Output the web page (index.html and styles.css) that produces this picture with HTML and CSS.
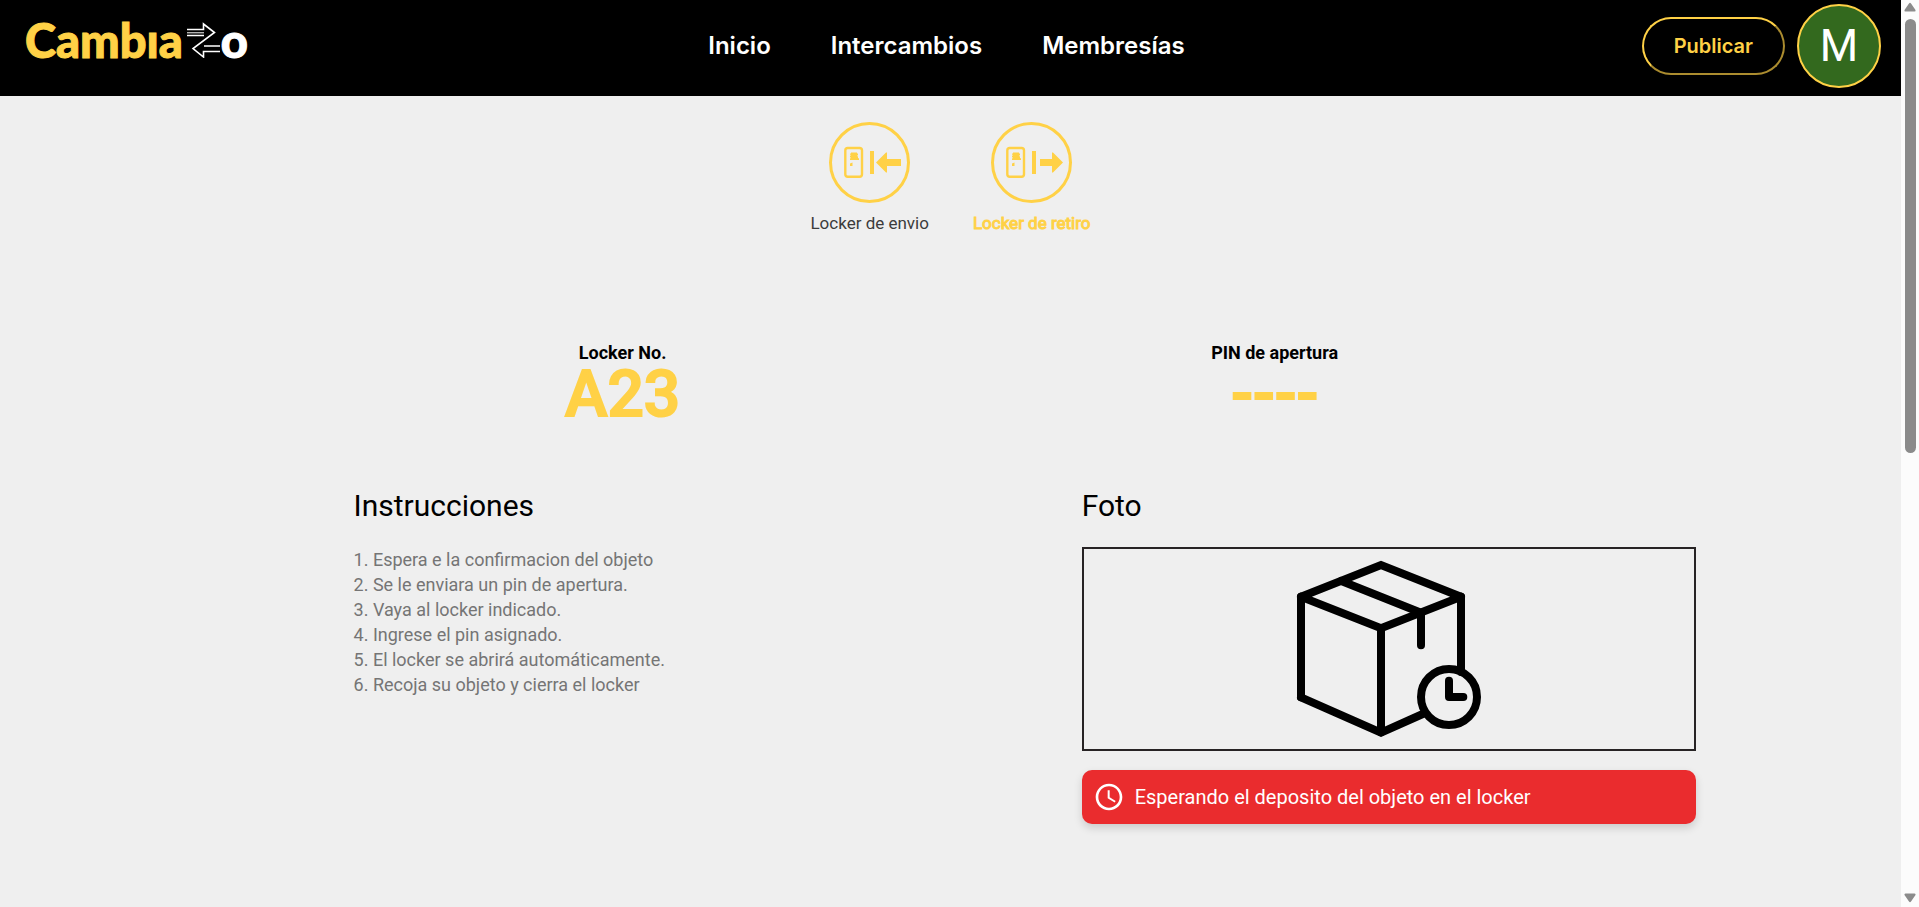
FILE: index.html
```html
<!DOCTYPE html>
<html lang="es">
<head>
<meta charset="utf-8">
<title>CambiaZo - Locker</title>
<link rel="stylesheet" href="styles.css">
</head>
<body>
<div class="page">
  <header class="header">
    <a class="logo" href="#">
      <span class="logo-main">Cambıa</span>
      <svg class="logo-arrows" viewBox="0 0 34 36" fill="none" stroke="#fff" stroke-width="1.6" aria-hidden="true">
        <path d="M0 7.500h16.500V2L27.500 10.500L6 26.500L16.500 35V29.500H33M0 13.500h17M17 24h16"/>
        <path stroke-width="1" d="M0 10.800h17"/>
      </svg>
      <span class="logo-end">o</span>
    </a>
    <nav class="nav">
      <a href="#">Inicio</a>
      <a href="#">Intercambios</a>
      <a href="#">Membresías</a>
    </nav>
    <div class="account">
      <button class="publish" type="button">Publicar</button>
      <button class="avatar" type="button">M</button>
    </div>
  </header>

  <main class="main">
    <div class="tabs">
      <button class="tab" type="button">
        <svg class="tab-icon" viewBox="0 0 81 81" aria-hidden="true">
          <circle cx="40.500" cy="40.500" r="39" fill="none" stroke="currentColor" stroke-width="3"/>
          <rect x="16.300" y="26" width="16.700" height="28.700" rx="2.500" fill="none" stroke="currentColor" stroke-width="2.400"/>
          <path d="M22 30.500h6v1h1v2h-1v.7h1v2h1V38h-9v-1.800h1v-.7h-1v-2h1v-.7h-1v-1.300h1zM21 41.500l2.500-1V44H21zM41 29h4v23h-4z"/>
          <path d="M47 40.500L57 30.500h1V37h14v7H58v6.500h-1z"/>
        </svg>
        <span>Locker de envio</span>
      </button>
      <button class="tab tab-active" type="button">
        <svg class="tab-icon" viewBox="0 0 81 81" aria-hidden="true">
          <circle cx="40.500" cy="40.500" r="39" fill="none" stroke="currentColor" stroke-width="3"/>
          <rect x="16.300" y="26" width="16.700" height="28.700" rx="2.500" fill="none" stroke="currentColor" stroke-width="2.400"/>
          <path d="M22 30.500h6v1h1v2h-1v.7h1v2h1V38h-9v-1.800h1v-.7h-1v-2h1v-.7h-1v-1.300h1zM21 41.500l2.500-1V44H21zM41 29h4v23h-4z"/>
          <path d="M72 40.500L62 30.500h-1V37H49v7h12v6.500h1z"/>
        </svg>
        <span>Locker de retiro</span>
      </button>
    </div>

    <section class="codes">
      <div class="code">
        <h2 class="code-label">Locker No.</h2>
        <p class="code-value">A23</p>
      </div>
      <div class="code">
        <h2 class="code-label">PIN de apertura</h2>
        <p class="code-value">----</p>
      </div>
    </section>

    <div class="details">
      <section>
        <h2 class="title">Instrucciones</h2>
        <ol class="steps">
          <li>Espera e la confirmacion del objeto</li>
          <li>Se le enviara un pin de apertura.</li>
          <li>Vaya al locker indicado.</li>
          <li>Ingrese el pin asignado.</li>
          <li>El locker se abrirá automáticamente.</li>
          <li>Recoja su objeto y cierra el locker</li>
        </ol>
      </section>
      <section>
        <h2 class="title">Foto</h2>
        <div class="photo">
          <svg class="package" viewBox="0 0 200 200" fill="none" stroke="#000" stroke-width="8" stroke-linecap="round" aria-hidden="true">
            <path d="M12 47.700L92 16l80 31.700M12 47.700L92 79.300l80-31.600M12 148.300l80 35.400 44-19.700"/>
            <path stroke-linejoin="round" d="M12 47.700v100.600M92 79.300v104M52.300 32L132 63.700v32.600M172 47.700V123"/>
            <circle cx="160" cy="148" r="28"/>
            <path stroke-linejoin="round" d="M160 131.700V148h14.300"/>
          </svg>
        </div>
        <div class="alert" role="status">
          <svg class="alert-icon" viewBox="0 0 24 24" fill="#fff" aria-hidden="true">
            <path d="M11.990 2C6.470 2 2 6.480 2 12s4.470 10 9.990 10C17.520 22 22 17.520 22 12S17.520 2 11.990 2zM12 20c-4.420 0-8-3.580-8-8s3.580-8 8-8 8 3.580 8 8-3.580 8-8 8zM12.500 7H11v6l5.250 3.150.75-1.230-4.500-2.670z"/>
          </svg>
          <span>Esperando el deposito del objeto en el locker</span>
        </div>
      </section>
    </div>
  </main>
</div>
<div class="scrollbar" aria-hidden="true">
  <svg class="scroll-arrow" viewBox="0 0 12 10"><path d="M5 1.500Q6 0 7 1.500L11.500 8Q12 9.500 10.500 9.500H1.500Q0 9.500 .5 8z"/></svg>
  <div class="scroll-track"><div class="scroll-thumb"></div></div>
  <svg class="scroll-arrow" viewBox="0 0 12 10"><path d="M5 8.500Q6 10 7 8.500L11.500 2Q12 .5 10.500 .5H1.500Q0 .5 .5 2z"/></svg>
</div>
</body>
</html>
```
FILE: styles.css
```css
* {
  box-sizing: border-box;
}

body {
  margin: 0;
  display: flex;
  min-height: 100vh;
  background: #efefef;
  color: #000;
  font-family: Roboto, "Liberation Sans", sans-serif;
}

h2, p, ol {
  margin: 0;
  padding: 0;
}

a {
  color: inherit;
  text-decoration: none;
}

button {
  cursor: pointer;
}

.page {
  flex: 1;
  min-width: 0;
}

.header {
  display: grid;
  grid-template-columns: 1fr auto 1fr;
  align-items: center;
  padding: 4px 20px 8px 25px;
  background: #000;
  color: #fff;
}

.logo {
  display: flex;
  align-items: center;
  padding-bottom: 12px;
  font: 900 47px/56px Lato, sans-serif;
  -webkit-text-stroke: 1px currentColor;
}

.logo-main {
  color: #ffd146;
}

.logo-arrows {
  width: 34px;
  height: 36px;
  margin-left: 4px;
}

.nav {
  display: flex;
  gap: 60px;
  margin-right: 13px;
  font: 600 24px/32px Inter, sans-serif;
}

.account {
  display: flex;
  align-items: center;
  justify-content: flex-end;
  gap: 12px;
}

.publish {
  padding: 14px 30px;
  border: 2px outset #ffd146;
  border-radius: 30px;
  background: #000;
  color: #ffd146;
  font: 600 20px/26px Inter, sans-serif;
}

.avatar {
  width: 84px;
  height: 84px;
  padding: 0;
  border: 2px solid #ffd146;
  border-radius: 50%;
  background: #33691e;
  color: #fff;
  font: 400 44px/80px Roboto, sans-serif;
}

.tabs {
  display: flex;
  justify-content: center;
  gap: 44px;
  padding-top: 26px;
}

.tab {
  display: flex;
  flex-direction: column;
  align-items: center;
  gap: 10px;
  padding: 0;
  border: 0;
  background: none;
  color: #3c3c3c;
  font: 400 17px/20px Roboto, sans-serif;
}

.tab-active {
  color: #ffd146;
  -webkit-text-stroke: 1px currentColor;
}

.tab-icon {
  width: 81px;
  height: 81px;
  fill: currentColor;
  color: #ffd146;
}

.codes {
  display: grid;
  grid-template-columns: 1fr 1fr;
  margin: 108px 15.8% 0 15.6%;
  text-align: center;
}

.code-label {
  font-size: 18px;
  line-height: 24px;
}

.code-value {
  color: #ffd146;
  font-size: 64px;
  font-weight: 500;
  line-height: 60px;
  -webkit-text-stroke: 2px currentColor;
}

.details {
  display: grid;
  grid-template-columns: 1fr 1fr;
  column-gap: 8.5%;
  margin: 63px 10.8% 0 18.6%;
}

.title {
  font-size: 30px;
  font-weight: 400;
  line-height: 36px;
}

.steps {
  margin-top: 23px;
  color: #757575;
  font-size: 18px;
  line-height: 25px;
  list-style-position: inside;
}

.photo {
  display: flex;
  justify-content: center;
  margin-top: 23px;
  border: 2px solid #272324;
}

.package {
  width: 200px;
  height: 200px;
}

.alert {
  display: flex;
  align-items: center;
  gap: 10px;
  margin-top: 19px;
  padding: 11px;
  border-radius: 10px;
  background: #ea2c2e;
  box-shadow: 0 4px 8px rgba(0, 0, 0, 0.15);
  color: #fff;
  font-size: 20px;
  line-height: 32px;
}

.alert-icon {
  width: 32px;
  height: 32px;
}

.scrollbar {
  display: flex;
  flex-direction: column;
  align-items: center;
  gap: 7px;
  width: 18px;
  height: 100vh;
  padding: 2px 0 4px;
  background: #fcfcfc;
}

.scroll-arrow {
  width: 12px;
  height: 10px;
  fill: #8b8b8b;
}

.scroll-track {
  flex: 1;
}

.scroll-thumb {
  width: 11px;
  height: 50%;
  border-radius: 6px;
  background: #8b8b8b;
}
```
